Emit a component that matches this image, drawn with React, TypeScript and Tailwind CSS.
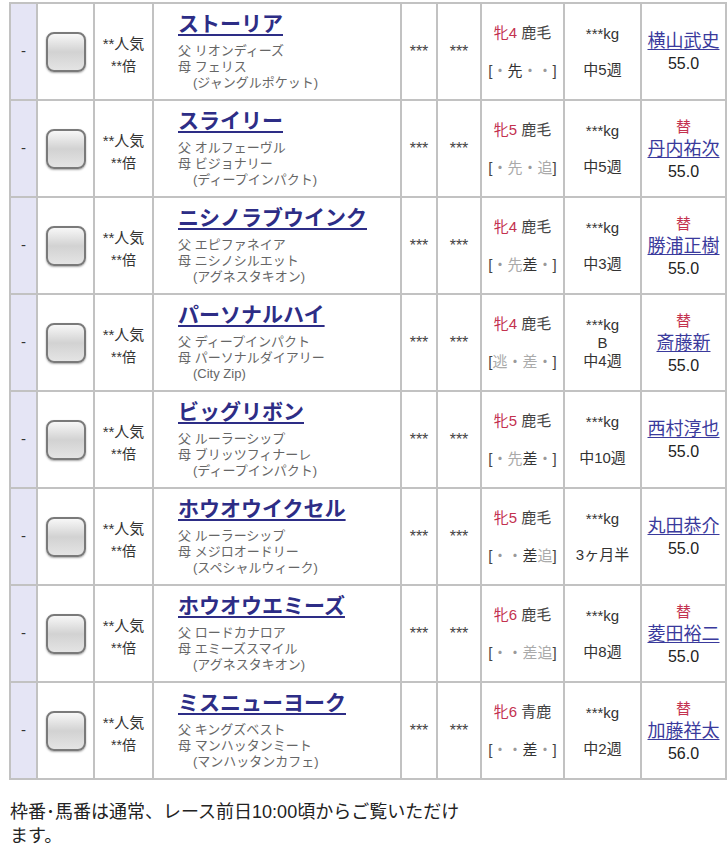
import React from "react";

type Horse = {
  name: string;
  sire: string;
  dam: string;
  bms: string;
  sex: string;
  coat: string;
  run: string;
  dark: number[];
  blinker?: boolean;
  interval: string;
  change: boolean;
  jockey: string;
  kg: string;
};

const horses: Horse[] = [
  { name: "ストーリア", sire: "リオンディーズ", dam: "フェリス", bms: "ジャングルポケット", sex: "牝4", coat: "鹿毛", run: "・先・・", dark: [1], interval: "中5週", change: false, jockey: "横山武史", kg: "55.0" },
  { name: "スライリー", sire: "オルフェーヴル", dam: "ビジョナリー", bms: "ディープインパクト", sex: "牝5", coat: "鹿毛", run: "・先・追", dark: [], interval: "中5週", change: true, jockey: "丹内祐次", kg: "55.0" },
  { name: "ニシノラブウインク", sire: "エピファネイア", dam: "ニシノシルエット", bms: "アグネスタキオン", sex: "牝4", coat: "鹿毛", run: "・先差・", dark: [2], interval: "中3週", change: true, jockey: "勝浦正樹", kg: "55.0" },
  { name: "パーソナルハイ", sire: "ディープインパクト", dam: "パーソナルダイアリー", bms: "City Zip", sex: "牝4", coat: "鹿毛", run: "逃・差・", dark: [], blinker: true, interval: "中4週", change: true, jockey: "斎藤新", kg: "55.0" },
  { name: "ビッグリボン", sire: "ルーラーシップ", dam: "ブリッツフィナーレ", bms: "ディープインパクト", sex: "牝5", coat: "鹿毛", run: "・先差・", dark: [2], interval: "中10週", change: false, jockey: "西村淳也", kg: "55.0" },
  { name: "ホウオウイクセル", sire: "ルーラーシップ", dam: "メジロオードリー", bms: "スペシャルウィーク", sex: "牝5", coat: "鹿毛", run: "・・差追", dark: [2], interval: "3ヶ月半", change: false, jockey: "丸田恭介", kg: "55.0" },
  { name: "ホウオウエミーズ", sire: "ロードカナロア", dam: "エミーズスマイル", bms: "アグネスタキオン", sex: "牝6", coat: "鹿毛", run: "・・差追", dark: [], interval: "中8週", change: true, jockey: "菱田裕二", kg: "55.0" },
  { name: "ミスニューヨーク", sire: "キングズベスト", dam: "マンハッタンミート", bms: "マンハッタンカフェ", sex: "牝6", coat: "青鹿", run: "・・差・", dark: [2], interval: "中2週", change: true, jockey: "加藤祥太", kg: "56.0" },
];

// 脚質 [・先・・]
const RunStyle = ({ run, dark }: { run: string; dark: number[] }) => (
  <span className="text-[#444]">
    [
    {run.split("").map((c, i) => (
      <span
        key={i}
        className={
          c === "・"
            ? "text-[#999]"
            : dark.includes(i)
            ? "text-[#333]"
            : "text-[#aaa]"
        }
      >
        {c}
      </span>
    ))}
    ]
  </span>
);

const Row = ({ h }: { h: Horse }) => (
  <>
    <div className="bg-[#e5e5f5] flex items-center justify-center text-[15px] text-[#333]">
      -
    </div>
    <div className="bg-white flex items-center justify-center">
      <div className="w-[40px] h-[40px] rounded-[8px] border-2 border-[#7a7a7a] bg-linear-to-b from-[#f7f7f7] via-[#d2d2d2] to-[#e4e4e4] shadow-[0_1px_2px_rgba(0,0,0,0.35)]" />
    </div>
    <div className="bg-white flex flex-col items-center pt-[29px] text-[#333] leading-[22px]">
      <div className="text-[15px]">**人気</div>
      <div className="text-[14px]">**倍</div>
    </div>
    <div className="bg-white pt-[6px] pl-[24px]">
      <a className="block text-[21px] leading-[28px] font-bold text-[#2d2d86] underline underline-offset-[3px] decoration-[1.5px] w-fit">
        {h.name}
      </a>
      <div className="mt-[5px] text-[13px] leading-[16px] text-[#666]">
        <div>父 {h.sire}</div>
        <div>母 {h.dam}</div>
        <div className="pl-[15px]">({h.bms})</div>
      </div>
    </div>
    <div className="bg-white flex items-center justify-center text-[16px] text-[#444]">
      ***
    </div>
    <div className="bg-white flex items-center justify-center text-[16px] text-[#444]">
      ***
    </div>
    <div className="bg-white flex flex-col items-center justify-center text-[15px] leading-[19px] text-[#444]">
      <div>
        <span className="text-[#c3324f]">{h.sex}</span> {h.coat}
      </div>
      <div>&nbsp;</div>
      <RunStyle run={h.run} dark={h.dark} />
    </div>
    <div className="bg-white flex flex-col items-center justify-center text-[15px] leading-[18px] text-[#333]">
      <div>***kg</div>
      <div>{h.blinker ? "B" : "\u00a0"}</div>
      <div>{h.interval}</div>
    </div>
    <div className="bg-white flex flex-col items-center justify-center leading-[22.5px] pt-[2px]">
      {h.change && <div className="text-[15px] text-[#c3324f]">替</div>}
      <a className="text-[18px] text-[#3a3a9c] underline underline-offset-[2px]">
        {h.jockey}
      </a>
      <div className="text-[16px] text-[#222]">{h.kg}</div>
    </div>
  </>
);

export default function App() {
  return (
    <div className="bg-white w-[727px] font-['Liberation_Sans','Noto_Sans_CJK_JP',sans-serif]">
      <div className="ml-[9px] mt-[2px] w-[718px] grid grid-cols-[25px_55px_57px_246px_34px_42px_81px_75px_83px] auto-rows-[95px] gap-[2px] p-[2px] bg-[#c2c2c2]">
        {horses.map((h) => (
          <Row key={h.name} h={h} />
        ))}
      </div>
      <p className="pt-[20px] pl-[10px] w-[476px] text-[18px] leading-[24px] text-[#222]">
        枠番･馬番は通常、レース前日10:00頃からご覧いただけます。
      </p>
    </div>
  );
}
